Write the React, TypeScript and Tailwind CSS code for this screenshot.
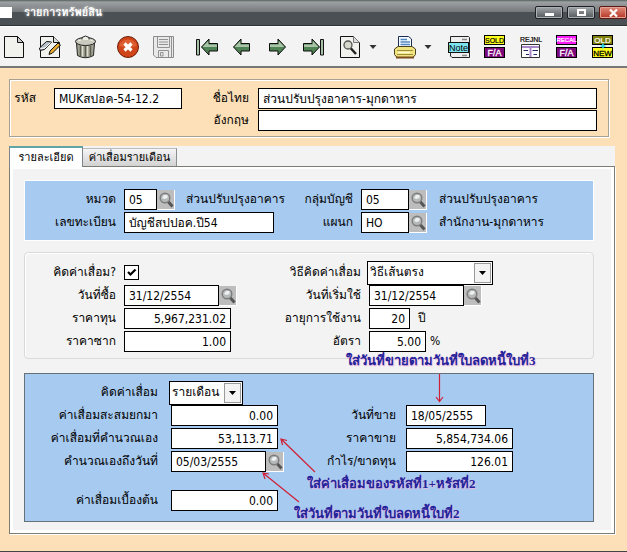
import type { ReactNode } from "react";

const box =
  "h-[21px] border border-black bg-white text-black outline-none rounded-none leading-[19px]";

function Label({ id, w, children }: { id: string; w: string; children: ReactNode }) {
  return (
    <label htmlFor={id} className={`shrink-0 whitespace-nowrap text-right ${w}`}>
      {children}
    </label>
  );
}

function Box({ id, value, w, right = false }: { id: string; value: string; w: string; right?: boolean }) {
  return (
    <input
      id={id}
      defaultValue={value}
      className={`${box} ${w} ${right ? "pr-1 text-right" : "pl-1"}`}
    />
  );
}

function Lookup({ label }: { label: string }) {
  return (
    <button
      type="button"
      aria-label={label}
      className="flex h-5 w-[18px] shrink-0 items-center justify-center border-b border-r border-white bg-[#bdbdbd]"
    >
      <svg width="16" height="17" viewBox="0 0 16 17">
        <path d="M10 10.5L14.5 15.5" stroke="#555" strokeWidth="3" />
        <circle cx="7" cy="7" r="4.8" fill="#b5b9b9" stroke="#7d7d7d" strokeWidth="1.4" />
        <path d="M4 7L6 4L9.500 4V7L6.500 8Z" fill="#eef0f0" />
      </svg>
    </button>
  );
}

function Choice({ id, value, w }: { id: string; value: string; w: string }) {
  return (
    <span className={`relative -ml-0.5 h-6 shrink-0 ${w}`}>
      <select
        id={id}
        defaultValue={value}
        className="h-6 w-full appearance-none rounded-none border border-black bg-white pl-0.5 text-black outline-none"
      >
        <option>{value}</option>
      </select>
      <span className="pointer-events-none absolute right-0.5 top-0.5 flex h-5 w-[17px] items-center justify-center border border-[#9a9a9a] bg-[#f3f3f3]">
        <svg width="7" height="4" viewBox="0 0 7 4">
          <path d="M0 0H7L3.5 4Z" fill="#000" />
        </svg>
      </span>
    </span>
  );
}

function Row({ children }: { children: ReactNode }) {
  return <div className="flex h-[21px] items-center">{children}</div>;
}

function Tool({ label, children }: { label: string; children: ReactNode }) {
  return (
    <button type="button" aria-label={label} className="h-6 w-6 shrink-0">
      <svg width="24" height="24" viewBox="0 0 24 24" fontFamily="Liberation Sans, sans-serif">
        {children}
      </svg>
    </button>
  );
}

function Caret({ label }: { label: string }) {
  return (
    <button type="button" aria-label={label} className="ml-[7px] flex h-6 w-2 shrink-0 items-center">
      <svg width="8" height="4" viewBox="0 0 8 4">
        <path d="M0.500 0H7.500L4 4Z" fill="#333" />
      </svg>
    </button>
  );
}

const sheet = "M2.500 1.500H15.500L21.500 7.500V22.500H2.500Z";

function LeftArrow() {
  return (
    <>
      <path d="M3.500 12L11 4V8.500H19.500V16H11V20Z" fill="#4f8353" stroke="#0c0c0c" />
      <path d="M5 11.500L10.300 6V9.500H19V12H5Z" fill="#a9c4a9" />
    </>
  );
}

function RightArrow() {
  return (
    <>
      <path d="M19.500 12L12 4V8.500H3.500V16H12V20Z" fill="#4f8353" stroke="#0c0c0c" />
      <path d="M18 11.500L12.700 6V9.500H4V12H18Z" fill="#a9c4a9" />
    </>
  );
}

function Badge({ top, topFill, topInk, bottom, bottomFill, bottomInk, plus = false }: {
  top: string; topFill: string; topInk: string; bottom: string; bottomFill: string; bottomInk: string; plus?: boolean;
}) {
  return (
    <>
      <rect x="1.500" y="0.500" width="20" height="9" fill={topFill} stroke="#000" />
      <rect x="1.500" y="12.500" width="20" height="10" fill={bottomFill} stroke="#000" />
      <text x="11.500" y={top.length > 4 ? 7.3 : 8} fontSize={top.length > 4 ? 6 : top.length > 3 ? 7 : 8} textAnchor="middle" fill={topInk} stroke={topInk} strokeWidth="0.200">{top}</text>
      <text x="11.500" y="20.500" fontSize={bottom === "NEW" ? 8 : 9} textAnchor="middle" fill={bottomInk} stroke={bottomInk} strokeWidth="0.300">{bottom}</text>
      {plus && <path d="M12 8.500V13.500M9.500 11H14.500" stroke="#25d5e5" strokeWidth="1.600" />}
    </>
  );
}

function Toolbar() {
  return (
    <div className="flex h-[39px] items-center overflow-hidden bg-[#f3f3f3] pl-0.5">
      <div className="flex gap-3">
        <Tool label="New">
          <path d={sheet} fill="#f1f1ed" stroke="#111" />
          <path d="M15.500 1.500V7.500H21.500Z" fill="#c9c9c9" stroke="#111" />
        </Tool>
        <Tool label="Edit">
          <path d={sheet} fill="#f1f1ed" stroke="#111" />
          <path d="M15.500 1.500V7.500H21.500" fill="#ddd" stroke="#111" />
          <path d="M1.500 13L8.500 6.500L13.500 7L6.500 14.500L2 15.500Z" fill="#b9c2ca" stroke="#111" />
          <path d="M2.500 13.500L7 13L12.500 7.500" fill="none" stroke="#fff" />
          <path d="M11 19.500L12 16L20 8L22.500 10L14.500 18Z" fill="#e8a92c" stroke="#111" />
        </Tool>
        <Tool label="Delete">
          <path d="M2.500 8L3.500 20.500Q11.500 25 19.500 20.500L20.500 8Z" fill="#a3a393" stroke="#222" />
          <path d="M6.500 11V21M11.500 11V22M16.500 11V21" stroke="#5d5d52" strokeWidth="1.500" />
          <path d="M8.500 11V21.500M13.500 11V21.500" stroke="#dcdccf" strokeWidth="1.500" />
          <ellipse cx="11.500" cy="6.500" rx="10" ry="4" fill="#c9c9bd" stroke="#222" />
          <path d="M4 6Q11.500 2.500 19 6" fill="none" stroke="#efefe5" />
          <path d="M8 4.500V2.500Q11.500 -0.500 15 2.500V4.500" fill="#efefe8" stroke="#222" />
        </Tool>
      </div>
      <div className="ml-[18px] flex gap-3">
        <Tool label="Cancel">
          <circle cx="12" cy="12" r="10.500" fill="#cf4418" stroke="#6e1e0c" />
          <path d="M3 11A9.500 9.500 0 0 1 21 11Q12 14 3 11Z" fill="#ee7a4e" opacity=".5" />
          <path d="M8.500 8.500L15.500 15.500M15.500 8.500L8.500 15.500" stroke="#fff" strokeWidth="3.200" />
        </Tool>
        <Tool label="Save">
          <path d="M1.500 1.500H21.500V22.500H4L1.500 20Z" fill="#e9e9e9" stroke="#8c8c8c" />
          <path d="M5.500 2V12.500H17.500V2M7 4.500H16M7 7H16M7 9.500H16M6.500 22V15.500H16.500V22M8.500 17.500H11V21H8.500ZM19.500 2V22" fill="none" stroke="#929292" />
        </Tool>
      </div>
      <div className="ml-[18px] flex gap-3">
        <Tool label="First record">
          <path d="M2.500 4.500H5.500V20H2.500Z" fill="#a9c0a8" stroke="#111" />
          <g transform="translate(4 0)"><LeftArrow /></g>
        </Tool>
        <Tool label="Previous record"><LeftArrow /></Tool>
        <Tool label="Next record"><RightArrow /></Tool>
        <Tool label="Last record">
          <path d="M18.500 4.500H21.500V20H18.500Z" fill="#a9c0a8" stroke="#111" />
          <g transform="translate(-2 0)"><RightArrow /></g>
        </Tool>
      </div>
      <div className="ml-3 flex">
        <Tool label="Preview">
          <path d={sheet} fill="#f1f1ed" stroke="#111" />
          <path d="M15.500 1.500V7.500H21.500" fill="#ddd" stroke="#777" />
          <path d="M12.500 13L18 19" stroke="#222" strokeWidth="2.500" />
          <circle cx="10" cy="10" r="4" fill="#d6d8cc" stroke="#555" strokeWidth="1.300" />
        </Tool>
        <Caret label="Preview options" />
      </div>
      <div className="ml-4 flex">
        <Tool label="Print">
          <path d="M5.500 12V1.500H15.500L18.500 4V12Z" fill="#f5faff" stroke="#1c2c58" />
          <path d="M7.500 4.500H14M7.500 7H17M7.500 9.500H17" stroke="#5489c4" strokeWidth="1.500" />
          <path d="M1.500 14L5 11.500H19L22.500 14V19.500L20 22.500H4L1.500 19.500Z" fill="#efe37f" stroke="#4a4220" />
          <path d="M4 15.500H20M4 19.500H20" stroke="#a08c36" />
          <path d="M5 17.500H17" stroke="#fffbd0" strokeWidth="1.500" />
          <path d="M3 22.500H21" stroke="#7a4d1c" strokeWidth="2" />
        </Tool>
        <Caret label="Print options" />
      </div>
      <div className="ml-[15px] flex gap-3">
        <Tool label="Note">
          <path d="M3.500 1.500H21.500L22.500 2.500V22.500H5L3.500 21Z" fill="#eee" stroke="#222" />
          <path d="M15 4.500H20M15 20.500H20" stroke="#888" strokeWidth="1.500" />
          <rect x="1.500" y="7.500" width="20" height="10" fill="#7ce4ee" stroke="#111" />
          <text x="11.500" y="16" fontSize="9" textAnchor="middle" fill="#000">Note</text>
        </Tool>
        <Tool label="Sold fixed asset">
          <Badge top="SOLD" topFill="#ffff1c" topInk="#000" bottom="F/A" bottomFill="#7c087c" bottomInk="#fff" />
        </Tool>
        <Tool label="Rejournal">
          <text x="12" y="7" fontSize="7" textAnchor="middle" fill="#000" stroke="#000" strokeWidth="0.200">REJNL</text>
          <path d="M2.500 9.500H20.500V22.500H2.500Z" fill="#fff" stroke="#333" />
          <path d="M3 12H20M11.500 11V22" stroke="#a987c9" strokeWidth="2" />
          <path d="M4.500 15.500H9M13.500 15.500H19M7 19.500H10M14.500 19.500H18" stroke="#222a66" />
        </Tool>
        <Tool label="Recalculate fixed asset">
          <Badge top="RECAL" topFill="#f81cf8" topInk="#fff" bottom="F/A" bottomFill="#7c087c" bottomInk="#fff" />
        </Tool>
        <Tool label="Old to new">
          <Badge top="OLD" topFill="#80800c" topInk="#fff" bottom="NEW" bottomFill="#ffff1c" bottomInk="#000" plus />
        </Tool>
      </div>
    </div>
  );
}

const winButton =
  "flex h-[13px] w-7 items-center justify-center rounded-xs border border-[#1c2023] bg-linear-to-b from-[#a3a8ab] to-[#53585c] shadow-[inset_0_0_0_1px_#aab0b4]";

function TitleBar() {
  return (
    <header className="flex h-[26px] items-center border-b border-[#2e3133] bg-[linear-gradient(#55605a_0,#9da1a3_2px,#74787b_12px,#4b5054_12px,#4b5054_100%)]">
      <span className="h-[11px] w-3 bg-white" />
      <h1 className="ml-3 flex-1 text-[11px] font-bold leading-5 text-white [text-shadow:0_0_3px_#ddd]">
        รายการทรัพย์สิน
      </h1>
      <div className="flex gap-1">
        <button type="button" aria-label="Minimize" className={winButton}>
          <span className="mt-1 h-[3px] w-[9px] bg-white" />
        </button>
        <button type="button" aria-label="Maximize" className={winButton}>
          <span className="h-[7px] w-[9px] border-2 border-white" />
        </button>
        <button
          type="button"
          aria-label="Close"
          className="flex h-[13px] w-7 items-center justify-center rounded-xs border border-[#5a1a12] bg-linear-to-b from-[#e08a7c] to-[#b53320] shadow-[inset_0_0_0_1px_#e2a399]"
        >
          <svg width="9" height="8" viewBox="0 0 9 8">
            <path d="M1 0.500L8 7.500M8 0.500L1 7.500" stroke="#fff" strokeWidth="2.200" />
          </svg>
        </button>
      </div>
    </header>
  );
}

const note =
  "absolute whitespace-nowrap font-['Liberation_Serif','Norasi',serif] text-[13px] leading-5 font-bold text-[#23239a] [text-shadow:1px_1px_1px_#f3b8e0]";

export default function App() {
  return (
    <div className="flex min-h-screen flex-col overflow-hidden border-b border-[#444] bg-[#fde0b8] font-['DejaVu_Sans_Condensed','Loma',sans-serif] text-[12px] leading-[19px] text-black">
      <TitleBar />
      <div className="border-b-2 border-t border-[#777] border-t-white">
        <Toolbar />
      </div>

      <main className="pl-[9px] pr-3 pt-[11px]">
        <section className="mr-1.5 flex border border-[#a9a094] pb-[5px] pl-[2px] pr-[11px] pt-2 shadow-[1px_1px_0_#fff,inset_1px_1px_0_#fff]">
          <Row>
            <Label id="code" w="w-6 mr-[18px]">รหัส</Label>
            <Box id="code" value="MUKสปอค-54-12.2" w="w-32" />
          </Row>
          <div className="flex flex-1 flex-col gap-px">
            <Row>
              <Label id="nameTh" w="w-[67px] mr-[9px]">ชื่อไทย</Label>
              <Box id="nameTh" value="ส่วนปรับปรุงอาคาร-มุกดาหาร" w="min-w-0 flex-1" />
            </Row>
            <Row>
              <Label id="nameEn" w="w-[67px] mr-[9px]">อังกฤษ</Label>
              <Box id="nameEn" value="" w="min-w-0 flex-1" />
            </Row>
          </div>
        </section>

        <div role="tablist" className="mt-[9px] flex h-5 items-end bg-[#f3f3f3] text-[11px] leading-[18px]">
          <button
            type="button"
            role="tab"
            aria-selected="true"
            className="relative -mb-px h-[21px] w-[74px] border-l border-r border-t-2 border-[#7d8588] border-t-[#5fa5a5] bg-white"
          >
            รายละเอียด
          </button>
          <button
            type="button"
            role="tab"
            aria-selected="false"
            className="h-[18px] w-[94px] border-r border-t border-[#8b9093] border-t-[#bbb] bg-linear-to-b from-[#f5f5f5] to-[#d2d2d2]"
          >
            ค่าเสื่อมรายเดือน
          </button>
        </div>

        <div className="border border-[#7d7d75] bg-[#f3f3f3] shadow-[1px_1px_0_#fff]">
          <div className="flex flex-col border-[3px] border-t-2 border-white pb-2 pl-[11px] pr-[17px] pt-[11px]">
            <section className="flex border border-white bg-[#a7caf0] pb-[7px] pt-2">
              <div className="flex w-[268px] shrink-0 flex-col gap-0.5">
                <Row>
                  <Label id="cat" w="w-[91px] mr-2">หมวด</Label>
                  <Box id="cat" value="05" w="w-[33px]" />
                  <Lookup label="ค้นหาหมวด" />
                  <span className="ml-[11px] whitespace-nowrap">ส่วนปรับปรุงอาคาร</span>
                </Row>
                <Row>
                  <Label id="reg" w="w-[91px] mr-2">เลขทะเบียน</Label>
                  <Box id="reg" value="บัญชีสปปอค.ปี54" w="w-[150px]" />
                </Row>
              </div>
              <div className="flex flex-1 flex-col gap-0.5">
                <Row>
                  <Label id="acct" w="w-[60px] mr-2">กลุ่มบัญชี</Label>
                  <Box id="acct" value="05" w="w-12" />
                  <Lookup label="ค้นหากลุ่มบัญชี" />
                  <span className="ml-3 whitespace-nowrap">ส่วนปรับปรุงอาคาร</span>
                </Row>
                <Row>
                  <Label id="dept" w="w-[60px] mr-2">แผนก</Label>
                  <Box id="dept" value="HO" w="w-12" />
                  <Lookup label="ค้นหาแผนก" />
                  <span className="ml-3 whitespace-nowrap">สำนักงาน-มุกดาหาร</span>
                </Row>
              </div>
            </section>

            <section className="mt-[11px] flex rounded-sm border border-[#dadada] pb-1.5 pt-[9px] shadow-[inset_1px_1px_0_#fff]">
              <div className="flex w-[244px] shrink-0 flex-col gap-0.5">
                <Row>
                  <Label id="calc" w="w-[91px] mr-2">คิดค่าเสื่อม?</Label>
                  <span className="relative h-[15px] w-[15px]">
                    <input id="calc" type="checkbox" defaultChecked className="block h-[15px] w-[15px] appearance-none border border-black bg-white" />
                    <svg width="15" height="15" viewBox="0 0 15 15" className="pointer-events-none absolute inset-0">
                      <path d="M4 7L6.500 9.500L11.500 4.500" fill="none" stroke="#000" strokeWidth="2.200" />
                    </svg>
                  </span>
                </Row>
                <Row>
                  <Label id="bought" w="w-[91px] mr-2">วันที่ซื้อ</Label>
                  <Box id="bought" value="31/12/2554" w="w-[95px]" />
                  <Lookup label="เลือกวันที่ซื้อ" />
                </Row>
                <Row>
                  <Label id="cost" w="w-[91px] mr-2">ราคาทุน</Label>
                  <Box id="cost" value="5,967,231.02" w="w-[107px]" right />
                </Row>
                <Row>
                  <Label id="scrap" w="w-[91px] mr-2">ราคาซาก</Label>
                  <Box id="scrap" value="1.00" w="w-[107px]" right />
                </Row>
              </div>
              <div className="flex flex-1 flex-col gap-0.5">
                <Row>
                  <Label id="method" w="w-[92px] mr-2">วิธีคิดค่าเสื่อม</Label>
                  <Choice id="method" value="วิธีเส้นตรง" w="w-[126px]" />
                </Row>
                <Row>
                  <Label id="start" w="w-[92px] mr-2">วันที่เริ่มใช้</Label>
                  <Box id="start" value="31/12/2554" w="w-[95px]" />
                  <Lookup label="เลือกวันที่เริ่มใช้" />
                </Row>
                <Row>
                  <Label id="life" w="w-[92px] mr-2">อายุการใช้งาน</Label>
                  <Box id="life" value="20" w="w-[41px]" right />
                  <span className="ml-2">ปี</span>
                </Row>
                <Row>
                  <Label id="rate" w="w-[92px] mr-2">อัตรา</Label>
                  <Box id="rate" value="5.00" w="w-[57px]" right />
                  <span className="ml-1">%</span>
                </Row>
              </div>
            </section>

            <section className="relative mt-3.5 flex border border-[#667078] bg-[#a7caf0] pb-2.5 pt-2">
              <div className="flex w-[290px] shrink-0 flex-col gap-0.5">
                <Row>
                  <Label id="period" w="w-[133px] mr-[13px]">คิดค่าเสื่อม</Label>
                  <Choice id="period" value="รายเดือน" w="w-[74px]" />
                </Row>
                <Row>
                  <Label id="accum" w="w-[133px] mr-[13px]">ค่าเสื่อมสะสมยกมา</Label>
                  <Box id="accum" value="0.00" w="w-[107px]" right />
                </Row>
                <Row>
                  <Label id="own" w="w-[133px] mr-[13px]">ค่าเสื่อมที่คำนวณเอง</Label>
                  <Box id="own" value="53,113.71" w="w-[107px]" right />
                </Row>
                <Row>
                  <Label id="until" w="w-[133px] mr-[13px]">คำนวณเองถึงวันที่</Label>
                  <Box id="until" value="05/03/2555" w="w-[95px]" />
                  <Lookup label="เลือกวันที่คำนวณ" />
                </Row>
                <div className="mt-4">
                  <Row>
                    <Label id="initial" w="w-[133px] mr-[13px]">ค่าเสื่อมเบื้องต้น</Label>
                    <Box id="initial" value="0.00" w="w-[107px]" right />
                  </Row>
                </div>
              </div>
              <div className="flex flex-1 flex-col gap-0.5 pt-[23px]">
                <Row>
                  <Label id="sold" w="w-[81px] mr-2.5">วันที่ขาย</Label>
                  <Box id="sold" value="18/05/2555" w="w-20" />
                </Row>
                <Row>
                  <Label id="price" w="w-[81px] mr-2.5">ราคาขาย</Label>
                  <Box id="price" value="5,854,734.06" w="w-[107px]" right />
                </Row>
                <Row>
                  <Label id="profit" w="w-[81px] mr-2.5">กำไร/ขาดทุน</Label>
                  <Box id="profit" value="126.01" w="w-[107px]" right />
                </Row>
              </div>

              <svg width="440" height="148" viewBox="0 0 440 148" className="pointer-events-none absolute left-0 top-0" fill="none" stroke="#d02035">
                <path d="M414.500 0V27M411 23L414.500 27.500L418 23" strokeWidth="1.200" />
                <path d="M290 98L256 65M262 66.500L256 65L257.500 71" strokeWidth="1.200" />
                <path d="M274 128L238 99M244 100L238 99L240 105" strokeWidth="1.200" />
              </svg>
              <p className={`${note} left-[321px] -top-[23px]`}>ใส่วันที่ขายตามวันที่ใบลดหนี้ใบที่3</p>
              <p className={`${note} left-[282px] top-[100px]`}>ใส่ค่าเสื่อมของรหัสที่1+หรัสที่2</p>
              <p className={`${note} left-[269px] top-[130px]`}>ใส่วันที่ตามวันที่ใบลดหนี้ใบที่2</p>
            </section>
          </div>
        </div>
      </main>
    </div>
  );
}
